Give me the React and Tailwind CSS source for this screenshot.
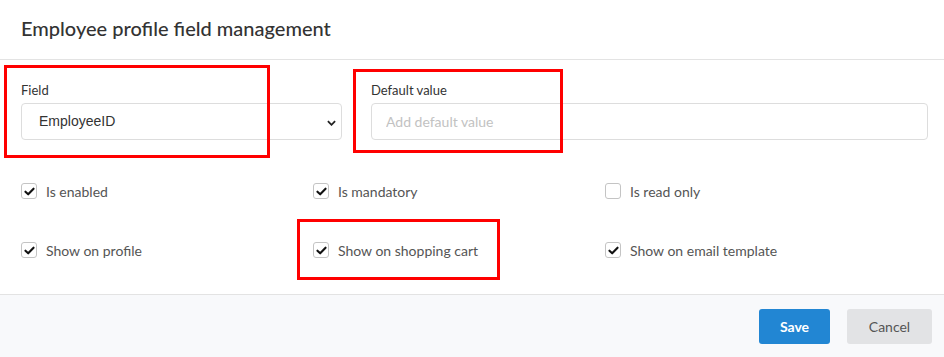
import { useState } from 'react'

const checks = [
  { label: 'Is enabled', checked: true },
  { label: 'Is mandatory', checked: true },
  { label: 'Is read only', checked: false },
  { label: 'Show on profile', checked: true },
  { label: 'Show on shopping cart', checked: true },
  { label: 'Show on email template', checked: true },
]

function Checkbox({ label, defaultChecked }) {
  const [on, setOn] = useState(defaultChecked)
  return (
    <label className="flex items-center h-5 cursor-pointer select-none" onClick={() => setOn(!on)}>
      <span className="w-4 h-4 rounded-[3px] border border-[#c4c4c4] bg-white flex items-center justify-center">
        {on && (
          <svg viewBox="0 0 16 16" className="w-[13px] h-[13px]">
            <path d="M3 8.2 L6.4 11.4 L13 4.6" fill="none" stroke="#111" strokeWidth="2.6" strokeLinecap="round" strokeLinejoin="round" />
          </svg>
        )}
      </span>
      <span className="ml-[9px] text-[14px] text-[#555]">{label}</span>
    </label>
  )
}

export default function App() {
  return (
    <div className="relative w-[944px] h-[357px] bg-white flex flex-col font-['Lato',sans-serif] text-[#333]">
      {/* Header */}
      <div className="h-[60px] border-b border-[#e3e3e3] px-[21px] flex items-center">
        <h1 className="text-[20px] font-medium text-[#333] leading-none -mt-[4px]">Employee profile field management</h1>
      </div>

      {/* Body */}
      <div className="flex-1 pl-[21px] pr-[16px] pt-[22px]">
        <div className="flex gap-[29px]">
          <div className="w-[321px] shrink-0">
            <div className="text-[13px] leading-4 mb-[5px] text-[#333]">Field</div>
            <div className="relative h-[37px] border border-[#ddd] rounded-[4px] flex items-center pl-[17px]">
              <span className="font-['Liberation_Sans',Arial,sans-serif] text-[14px] text-[#333]">EmployeeID</span>
              <svg viewBox="0 0 10 6" className="absolute right-[5px] top-[16px] w-[9px] h-[6px]">
                <path d="M1 1 L5 5 L9 1" fill="none" stroke="#222" strokeWidth="2" />
              </svg>
            </div>
          </div>
          <div className="w-[557px] shrink-0">
            <div className="text-[13px] leading-4 mb-[5px] text-[#333]">Default value</div>
            <input
              className="w-full h-[37px] border border-[#ddd] rounded-[4px] px-[14px] text-[14px] outline-none placeholder:text-[#c2c2c2]"
              placeholder="Add default value"
            />
          </div>
        </div>

        <div className="grid grid-cols-[292px_292px_1fr] gap-y-[39px] mt-[41px]">
          {checks.map((c) => (
            <Checkbox key={c.label} label={c.label} defaultChecked={c.checked} />
          ))}
        </div>
      </div>

      {/* Footer */}
      <div className="h-[63px] border-t border-[#e3e3e3] bg-[#f8f9fb] flex items-start justify-end gap-[17px] pt-[14px] pr-[12px]">
        <button className="w-[71px] h-[35px] rounded-[3px] bg-[#2286d3] text-white text-[14px] font-bold">Save</button>
        <button className="w-[85px] h-[35px] rounded-[3px] bg-[#e2e3e5] text-[#555] text-[14px]">Cancel</button>
      </div>

      {/* Annotation boxes */}
      <div className="absolute left-[4px] top-[65px] w-[266px] h-[93px] border-[3px] border-[#ff0000] pointer-events-none" />
      <div className="absolute left-[353px] top-[69px] w-[210px] h-[84px] border-[3px] border-[#ff0000] pointer-events-none" />
      <div className="absolute left-[297px] top-[219px] w-[203px] h-[61px] border-[3px] border-[#ff0000] pointer-events-none" />
    </div>
  )
}
